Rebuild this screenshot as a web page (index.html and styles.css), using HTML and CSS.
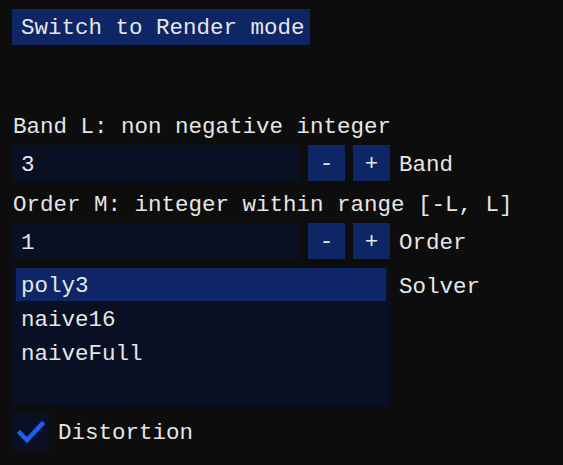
FILE: index.html
```html
<!DOCTYPE html>
<html>
<head>
<meta charset="utf-8">
<link rel="stylesheet" href="styles.css">
</head>
<body>
<div class="panel">
  <div class="btn mode-btn">Switch to Render mode</div>
  <div class="label first-label">Band L: non negative integer</div>
  <div class="row">
    <div class="input">3</div>
    <div class="btn step">-</div>
    <div class="btn step">+</div>
    <div class="side row-label">Band</div>
  </div>
  <div class="label second-label">Order M: integer within range [-L, L]</div>
  <div class="row">
    <div class="input">1</div>
    <div class="btn step">-</div>
    <div class="btn step">+</div>
    <div class="side row-label">Order</div>
  </div>
  <div class="list-row">
    <div class="listbox">
      <div class="item selected">poly3</div>
      <div class="item">naive16</div>
      <div class="item">naiveFull</div>
    </div>
    <div class="side list-label">Solver</div>
  </div>
  <div class="check-row">
    <div class="checkbox"><svg width="37" height="37" viewBox="0 0 37 37"><polyline points="8,20 15,27 30,11" fill="none" stroke="#1f5ef0" stroke-width="4.5" stroke-linecap="square" stroke-linejoin="miter"/></svg></div>
    <div class="side check-label">Distortion</div>
  </div>
</div>
</body>
</html>
```

FILE: styles.css
```css
html, body {
  margin: 0;
  padding: 0;
  background: #0d0d0d;
  width: 563px;
  height: 465px;
  overflow: hidden;
}
.panel {
  display: flex;
  flex-direction: column;
  align-items: flex-start;
  padding: 9px 0 0 12px;
  font-family: "Liberation Mono", "DejaVu Sans Mono", monospace;
  font-size: 22.5px;
  line-height: 26px;
  color: #e6e6e6;
}
.btn {
  background: #0e2566;
  height: 36px;
  display: flex;
  align-items: center;
  box-sizing: border-box;
  padding-top: 2px;
  white-space: pre;
}
.mode-btn {
  padding-left: 9px;
  width: 298px;
}
.label {
  height: 26px;
  padding-left: 1px;
  white-space: pre;
}
.first-label { margin-top: 69px; }
.second-label { margin-top: 11px; }
.row {
  display: flex;
  align-items: center;
  margin-top: 5px;
  height: 36px;
}
.input {
  width: 288px;
  height: 36px;
  background: #0a1024;
  box-sizing: border-box;
  padding: 3px 0 0 9px;
  display: flex;
  align-items: center;
}
.step {
  width: 37px;
  justify-content: center;
  margin-left: 8px;
}
.side {
  margin-left: 9px;
  white-space: pre;
}
.row-label {
  padding-top: 4px;
}
.list-row {
  display: flex;
  align-items: flex-start;
  margin-top: 8px;
}
.listbox {
  width: 377px;
  height: 139px;
  background: #0a1024;
  box-sizing: border-box;
  padding: 1px 3px 0 4px;
  display: flex;
  flex-direction: column;
  gap: 1px;
}
.item {
  height: 33px;
  box-sizing: border-box;
  display: flex;
  align-items: center;
  padding: 2px 0 0 5px;
}
.item.selected {
  background: #0e2566;
}
.list-label {
  margin-left: 10px;
  margin-top: 7px;
}
.check-row {
  display: flex;
  align-items: center;
  margin-top: 7px;
}
.check-label {
  padding-top: 3px;
}
.checkbox {
  display: flex;
  width: 37px;
  height: 37px;
  background: #0a1024;
}
.checkbox svg { display: block; }
```
